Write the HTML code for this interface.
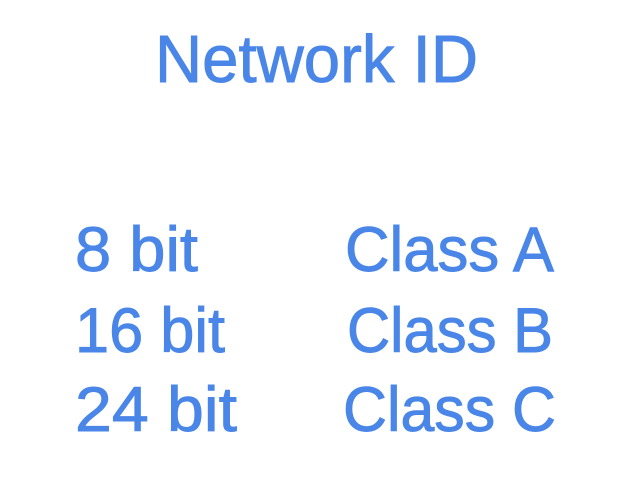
<!DOCTYPE html>
<html><head><meta charset="utf-8"><style>
html,body{margin:0;padding:0;background:#fff;width:626px;height:481px;overflow:hidden}
text{font-family:"Liberation Sans",sans-serif;fill:#4a86e8;stroke:#4a86e8;stroke-width:0.9}
</style></head><body>
<svg width="626" height="481" viewBox="0 0 626 481" xmlns="http://www.w3.org/2000/svg">
<text x="155" y="82" font-size="67" textLength="323" lengthAdjust="spacingAndGlyphs">Network ID</text>
<text x="75" y="271" font-size="63" textLength="123" lengthAdjust="spacingAndGlyphs">8 bit</text>
<text x="75" y="352" font-size="63" textLength="150" lengthAdjust="spacingAndGlyphs">16 bit</text>
<text x="75" y="431" font-size="63" textLength="162" lengthAdjust="spacingAndGlyphs">24 bit</text>
<text x="345" y="271" font-size="63" textLength="209" lengthAdjust="spacingAndGlyphs">Class A</text>
<text x="347" y="352" font-size="63" textLength="206" lengthAdjust="spacingAndGlyphs">Class B</text>
<text x="343" y="431" font-size="63" textLength="213" lengthAdjust="spacingAndGlyphs">Class C</text>
</svg>
</body></html>
